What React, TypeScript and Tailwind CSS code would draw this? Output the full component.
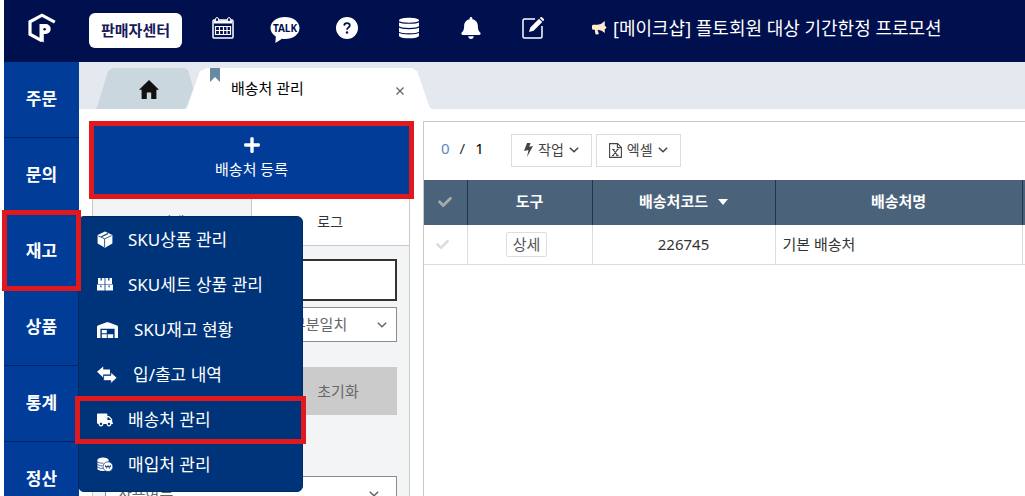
import React, { useState } from 'react';
import { FaBell, FaCheck, FaPlus, FaTruck } from 'react-icons/fa';

const NAV = ['주문', '문의', '재고', '상품', '통계', '정산'];

const BoxIcon = () => (
    <svg width="16" height="18" viewBox="0 0 16 18" fill="currentColor">
        <path d="M8 .6 15.400 4v8.600L8 16.800.6 12.600V4z" />
        <path d="M1.400 5 7.600 7.800 14.600 4.600M7.600 8v8" stroke="#00347a" strokeWidth=".8" fill="none" />
        <path d="m4.400 5.800 6.600-3.400" stroke="#00347a" strokeWidth="1.100" fill="none" />
    </svg>
);

const BoxesIcon = () => (
    <svg width="16" height="13" viewBox="0 0 16 13" fill="currentColor">
        <path d="M1 0h6.600v6H1zM8.400 0H15v6H8.400zM0 6.600h7.600V12.500H0zM8.400 6.600H16v5.900H8.400z" />
        <path d="M3.600 0h1.200v2.400H3.600zM11.200 0h1.200v2.400h-1.200zM3.300 7.400h1.200v1.800H3.300zM11.500 7.400h1.200v1.800h-1.200z" fill="#00347a" />
    </svg>
);

const WarehouseIcon = () => (
    <svg width="21" height="16" viewBox="0 0 21 16" fill="currentColor">
        <path fillRule="evenodd" d="M0 5Q0 4 .9 3.600L9.700.3q.8-.3 1.600 0l8.800 3.300q.9.4.9 1.400V16h-3.400V6.800H3.400V16H0z" />
        <path d="M4.800 8h5v3.200h-5zM4.800 12.200h5V16h-5zM10.700 12.200h5.500V16h-5.500z" />
    </svg>
);

const ArrowsIcon = () => (
    <svg width="20" height="18" viewBox="0 0 20 18" fill="currentColor">
        <path d="M0 5.800 6.200.4v3.200h6.800v5H6.200v2.800z" />
        <path d="m20 11.800-6.200-5.600v3.200H6.600v5.200h7.200v2.800z" stroke="#00347a" strokeWidth=".7" />
    </svg>
);

const CoinsIcon = () => (
    <svg width="16" height="15" viewBox="0 0 16 15" fill="currentColor">
        <ellipse cx="6" cy="3" rx="5.500" ry="2.500" />
        <path d="M.5 3h11v9.500q-5.500 3-11 0z" />
        <path d="M.5 5q3 1.600 6 1.200M.5 7.600q3 1.600 5 1.200M.5 10.200q3 1.600 6 1.200" stroke="#00347a" strokeWidth=".7" fill="none" />
        <circle cx="11" cy="9.700" r="4.900" stroke="#00347a" strokeWidth=".7" />
        <path d="m8.400 8 1.200 3.400L11 8.400l1.400 3L13.600 8M8 9.500h6" stroke="#00347a" strokeWidth=".7" fill="none" />
    </svg>
);

const MENU = [
    { label: 'SKU상품 관리', icon: <BoxIcon /> },
    { label: 'SKU세트 상품 관리', icon: <BoxesIcon /> },
    { label: 'SKU재고 현황', icon: <WarehouseIcon />, wide: true },
    { label: '입/출고 내역', icon: <ArrowsIcon />, wide: true },
    { label: '배송처 관리', icon: <FaTruck size={16} />, marked: true },
    { label: '매입처 관리', icon: <CoinsIcon /> },
];

const Chevron = ({ className = '' }: { className?: string }) => (
    <svg width="10" height="6" viewBox="0 0 10 6" fill="none" stroke="currentColor" strokeWidth="1.500" className={className}>
        <path d="m.8.8 4.200 4L9.200.8" />
    </svg>
);

const Logo = () => (
    <svg width="28" height="30" viewBox="0 0 28 30" fill="none">
        <path d="M26.800 9.200 14 2.200 2 8.800v12.400l12 6.600" stroke="white" strokeWidth="3.200" />
        <path d="M11.500 11h6.200a5 5 0 0 1 0 10H15.800v8.500L11.500 27z" fill="white" />
        <circle cx="16.600" cy="16.300" r="1.300" fill="#000f4d" />
    </svg>
);

const CalendarIcon = () => (
    <svg width="22" height="22" viewBox="0 0 22 22" fill="none" stroke="white">
        <rect x="1" y="3" width="20" height="18" rx="1" strokeWidth="1.500" />
        <path d="M2 5h18" strokeWidth="3" />
        <path d="M3 9.500h16M3 13.500h16M3 17.500h16M3.500 9v9M7.500 9v9M11.500 9v9M15 9v9M18.500 9v9" strokeWidth="1.200" />
        <rect x="3.500" y=".6" width="3" height="4" rx="1.500" fill="#000f4d" />
        <rect x="15.500" y=".6" width="3" height="4" rx="1.500" fill="#000f4d" />
    </svg>
);

const TalkIcon = () => (
    <svg width="30" height="28" viewBox="0 0 30 28" fill="white">
        <path d="M15 1C7 1 .5 5.500.5 12c0 3.600 2 6.500 5.300 8.400L5.400 27l6.600-4.300c1 .2 2 .3 3 .3 8 0 14.500-4.600 14.500-11S23 1 15 1z" />
        <text x="15" y="16" textAnchor="middle" fontSize="10" fontWeight="700" fontFamily="Noto Sans, sans-serif" fill="#000f4d">TALK</text>
    </svg>
);

const HelpIcon = () => (
    <svg width="22" height="22" viewBox="0 0 22 22">
        <circle cx="11" cy="11" r="11" fill="white" />
        <path d="M8.200 8.600c.2-3.400 5.800-3.200 5.600 0-.1 1.800-2.800 2-2.800 4.200" fill="none" stroke="#000f4d" strokeWidth="1.700" />
        <circle cx="11" cy="15.500" r="1.200" fill="#000f4d" />
    </svg>
);

const DatabaseIcon = () => (
    <svg width="22" height="22" viewBox="0 0 22 22" fill="white">
        <path d="M1 3.200C1-.2 21-.2 21 3.200v15.600c0 3.400-20 3.400-20 0z" />
        <path d="M0 4.300c4 2.600 18 2.600 22 0M0 9.600c4 2.600 18 2.600 22 0M0 14.900c4 2.600 18 2.600 22 0" fill="none" stroke="#000f4d" strokeWidth="1.200" />
    </svg>
);

const EditIcon = () => (
    <svg width="22" height="22" viewBox="0 0 22 22" fill="none">
        <path d="M13 2H2.500Q1 2 1 3.500v16Q1 21 2.500 21h16q1.500 0 1.500-1.500V9" stroke="white" strokeWidth="1.500" />
        <path d="m7 15 1.300-4.600 8.700-8.600 3.300 3.300-8.700 8.600zM17.800 1l.8-.8q.8-.6 1.600.2l1.400 1.400q.8.8.2 1.600l-.8.8z" fill="white" />
    </svg>
);

const MegaphoneIcon = () => (
    <svg width="15" height="14" viewBox="0 0 15 14" fill="#ffecc8">
        <path d="M12.800 0v5q1.600.1 1.600 1.500t-1.600 1.500v4Q10 9.200 6 8.800q-1 1 .4 2.200-.4.8.6 1.800-1.600 1.200-3.400.4Q2.800 11 2.900 8.800H1.500Q0 8.800 0 7.400V5.200q0-1.400 1.500-1.400h4Q9.600 3.400 12.800 0z" />
    </svg>
);

const HomeIcon = () => (
    <svg width="20" height="19" viewBox="0 0 20 19" fill="currentColor">
        <path d="m10 0 10 9.800h-2.600V19h-5.200v-6.600H7.800V19H2.600V9.800H0z" />
    </svg>
);

const BoltIcon = () => (
    <svg width="9" height="14" viewBox="0 0 9 14" fill="#444">
        <path d="M3 0h3.600L5.200 3.800 9 3 3 14l1.500-7L0 8z" />
    </svg>
);

const ExcelIcon = () => (
    <svg width="13" height="15" viewBox="0 0 13 15" fill="none" stroke="#444">
        <path d="M.6.6h8L12.400 4.400v10H.6zM8.400.6v4h4" strokeWidth="1.100" />
        <path d="m4 6.500 4.600 6M8.600 6.500 4 12.500M3.200 6.500h2.400M7.600 6.500h2M3 12.500h2M7.200 12.500h2.400" strokeWidth="1.100" />
    </svg>
);

const App = () => {
    const [active, setActive] = useState('재고');

    return (
        <div className="flex h-screen flex-col overflow-hidden bg-white pl-1 font-['Noto_Sans','Noto_Sans_CJK_KR',sans-serif] text-[#333]">
            {/* Top bar */}
            <header className="flex h-[62px] shrink-0 items-center bg-[#000f4d] pl-6 pb-1.5 text-white">
                <a href="#" aria-label="Home"><Logo /></a>
                <button className="ml-[33px] mt-1 h-[35px] w-[93px] rounded-md bg-white text-[15px] font-bold text-[#17195a]">판매자센터</button>
                <nav className="ml-[26px] flex items-center gap-8">
                    <button aria-label="Calendar" className="flex w-[30px] justify-center"><CalendarIcon /></button>
                    <button aria-label="Talk" className="flex w-[30px] justify-center pt-1"><TalkIcon /></button>
                    <button aria-label="Help" className="flex w-[30px] justify-center"><HelpIcon /></button>
                    <button aria-label="Data" className="flex w-[30px] justify-center"><DatabaseIcon /></button>
                    <button aria-label="Alerts" className="flex w-[30px] justify-center"><FaBell size={22} /></button>
                    <button aria-label="Edit" className="flex w-[30px] justify-center"><EditIcon /></button>
                </nav>
                <a href="#" className="ml-11 flex items-center gap-1.5 whitespace-nowrap text-lg">
                    <MegaphoneIcon />
                    [메이크샵] 플토회원 대상 기간한정 프로모션
                </a>
            </header>

            <div className="flex min-h-0 flex-1">
                {/* Side navigation */}
                <nav className="relative w-[75px] shrink-0 bg-[#003c98]">
                    {NAV.map(item => (
                        <button
                            key={item}
                            onClick={() => setActive(item)}
                            className="relative flex h-[76px] w-full items-center justify-center border-b border-[#002763] pb-0.5 text-[17px] font-bold text-white"
                        >
                            {item}
                            {active === item && <span className="absolute -inset-x-0.5 -top-1 -bottom-0.5 z-20 border-5 border-[#e0191f]" />}
                        </button>
                    ))}
                    {/* Flyout menu */}
                    <ul className="absolute left-[74px] top-[154px] z-10 w-[225px] rounded-md border border-[#002a63] bg-[#00347a] pb-1 text-[17px] text-white">
                        {MENU.map(item => (
                            <li key={item.label} className="relative">
                                <a href="#" className={`flex h-[45px] items-center pl-[18px] ${item.wide ? 'gap-4' : 'gap-[15px]'}`}>
                                    {item.icon}
                                    {item.label}
                                </a>
                                {item.marked && <span className="absolute -inset-x-1 -top-px -bottom-0.5 border-5 border-[#e0191f]" />}
                            </li>
                        ))}
                    </ul>
                </nav>

                <div className="flex min-w-0 flex-1 flex-col">
                    {/* Page tabs */}
                    <div className="flex h-[47px] shrink-0 items-end bg-[#e4e8ef] pl-4">
                        <button aria-label="Home" className="flex h-[41px] w-[108px] items-center justify-center bg-[#cbd7de] pt-0.5 text-[#111] [clip-path:polygon(0_100%,2%_95%,12%_8%,16%_0,82%_0,86%_5%,91%_50%,84%_100%)]">
                            <HomeIcon />
                        </button>
                        <div className="relative -ml-[18px] flex h-[41px] w-[247px] items-center justify-between bg-white pl-[46px] pr-7 text-[15px] text-black [clip-path:polygon(0_100%,1%_95%,6%_8%,9%_0,92%_0,94%_8%,99%_95%,100%_100%)]">
                            <svg width="10" height="14" viewBox="0 0 10 14" className="absolute left-[25px] top-0"><path d="M0 0h10v14L5 9l-5 5z" fill="#678aa1" /></svg>
                            배송처 관리
                            <button aria-label="Close tab" className="mt-1">
                                <svg width="8" height="8" viewBox="0 0 8 8" stroke="#666" strokeWidth="1.300"><path d="m.5.5 7 7m0-7-7 7" /></svg>
                            </button>
                        </div>
                    </div>

                    <div className="flex min-h-0 flex-1 pt-3">
                        {/* Search panel */}
                        <section className="ml-2.5 w-[325px] shrink-0">
                            <button className="flex h-[78px] w-full flex-col items-center justify-center gap-1 border-5 border-[#e0191f] bg-[#003c98] pb-1 text-[15px] text-white">
                                <FaPlus size={18} />
                                배송처 등록
                            </button>
                            <div className="mr-1 ml-[3px] h-full border-x border-[#c8c8c8] bg-[#f2f4f5]">
                                <div className="flex h-[47px] border-b border-[#c8c8c8] text-sm">
                                    <button className="flex-1">검색</button>
                                    <button className="flex-1 border-l border-[#c8c8c8] bg-white">로그</button>
                                </div>
                                <form className="px-3 pt-[13px] text-[15px] text-[#666]">
                                    <input aria-label="검색어" className="h-[42px] w-full border-2 border-[#333] bg-white px-3" />
                                    <div className="relative mt-1.5">
                                        <select aria-label="일치 조건" className="h-[35px] w-full appearance-none border border-[#8c8c8c] bg-white pl-[186px]">
                                            <option>부분일치</option>
                                        </select>
                                        <Chevron className="pointer-events-none absolute right-2.5 top-[15px]" />
                                    </div>
                                    <div className="mt-[25px] flex h-12">
                                        <button type="submit" aria-label="검색" className="flex-1 bg-[#4a637b]" />
                                        <button type="reset" className="w-[118px] bg-[#cbcbcb]">초기화</button>
                                    </div>
                                    <div className="relative mt-[61px]">
                                        <select aria-label="사용여부" className="h-[35px] w-full appearance-none border border-[#8c8c8c] bg-white px-3">
                                            <option>사용여부</option>
                                        </select>
                                        <Chevron className="pointer-events-none absolute right-[18px] top-[15px]" />
                                    </div>
                                </form>
                            </div>
                        </section>

                        {/* Result list */}
                        <main className="ml-[9px] min-w-0 flex-1 border-t border-l border-[#c8c8c8]">
                            <div className="flex h-[58px] items-center pb-0.5 text-[15px]">
                                <div className="flex w-[87px] gap-2.5 pl-[17px] pb-1">
                                    <span className="text-[#5b88c9]">0</span>
                                    <span>/</span>
                                    <span className="text-black">1</span>
                                </div>
                                <button className="flex h-[33px] items-center gap-[5px] border border-[#ddd] px-3 text-sm text-[#444]">
                                    <BoltIcon />작업<Chevron />
                                </button>
                                <button className="ml-1 flex h-[33px] items-center gap-[5px] border border-[#ddd] px-3 text-sm text-[#444]">
                                    <ExcelIcon />엑셀<Chevron />
                                </button>
                            </div>
                            <table className="w-full table-fixed border-collapse text-[15px]">
                                <colgroup>
                                    <col className="w-[43px]" />
                                    <col className="w-[125px]" />
                                    <col className="w-[183px]" />
                                    <col />
                                    <col className="w-[3px]" />
                                </colgroup>
                                <thead>
                                    <tr className="h-[45px] bg-[#4a637b] text-white *:pb-0.5">
                                        <th className="border-r border-[#1d3648]"><FaCheck size={14} className="mx-auto text-[#aaa]" /></th>
                                        <th className="border-r border-[#1d3648]">도구</th>
                                        <th className="border-r border-[#1d3648]">
                                            <span className="flex items-center justify-center gap-2.5">
                                                배송처코드
                                                <svg width="10" height="6" viewBox="0 0 10 6" fill="currentColor"><path d="M0 0h10L5 6z" /></svg>
                                            </span>
                                        </th>
                                        <th className="border-r border-[#1d3648]">배송처명</th>
                                        <th />
                                    </tr>
                                </thead>
                                <tbody>
                                    <tr className="h-[39px] border-b border-[#ddd]">
                                        <td className="border-r border-[#ddd]"><FaCheck size={13} className="ml-3 text-[#ddd]" /></td>
                                        <td className="border-r border-[#ddd] pr-1.5 text-center">
                                            <button className="h-[25px] rounded-xs border border-[#ddd] px-1.5 leading-5 text-[#555]">상세</button>
                                        </td>
                                        <td className="border-r border-[#ddd] text-center">226745</td>
                                        <td className="border-r border-[#ddd] px-[7px]">기본 배송처</td>
                                        <td />
                                    </tr>
                                </tbody>
                            </table>
                        </main>
                    </div>
                </div>
            </div>
        </div>
    );
};

export default App;
